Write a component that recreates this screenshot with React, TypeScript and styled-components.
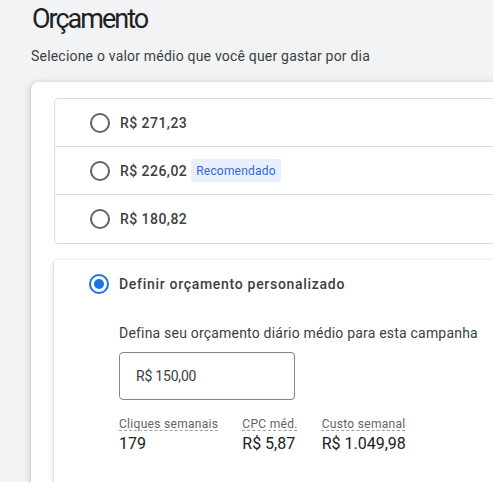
import React from "react";
import styled, { createGlobalStyle } from "styled-components";

const Global = createGlobalStyle`
  html, body { margin: 0; padding: 0; background: #f1f3f4; }
  body { font-family: Roboto, "Liberation Sans", Arial, sans-serif; }
`;

const Page = styled.div`
  width: 493px;
  height: 482px;
  overflow: hidden;
  background: #f1f3f4;
  box-sizing: border-box;
  padding-top: 1px;
`;

const Header = styled.div`
  padding-left: 31px;
`;

const Title = styled.h1`
  margin: 0 0 0 1px;
  font-size: 27px;
  line-height: 36px;
  font-weight: 400;
  letter-spacing: -2px;
  color: #202124;
`;

const Subtitle = styled.p`
  margin: 9px 0 0 0;
  font-size: 14px;
  line-height: 20px;
  letter-spacing: 0.2px;
  color: #3c4043;
`;

const Card = styled.div`
  margin: 16px 0 0 31px;
  width: 520px;
  min-height: 420px;
  background: #fff;
  border-radius: 8px 0 0 0;
  box-shadow: 0 1px 2px rgba(60, 64, 67, 0.3), 0 2px 6px 2px rgba(60, 64, 67, 0.15);
  padding: 16px 0 0 23px;
  box-sizing: border-box;
  display: flex;
  flex-direction: column;
  gap: 16px;
`;

const Group = styled.div`
  border: 1px solid #dadce0;
  border-radius: 4px;
  display: flex;
  flex-direction: column;
`;

const Row = styled.div<{ $last?: boolean }>`
  height: 48px;
  box-sizing: border-box;
  display: flex;
  align-items: center;
  padding-left: 35px;
  gap: 10px;
  border-bottom: ${(p) => (p.$last ? "none" : "1px solid #dadce0")};
`;

const Radio = styled.span<{ $checked?: boolean }>`
  width: 20px;
  height: 20px;
  box-sizing: border-box;
  border-radius: 50%;
  border: 2px solid ${(p) => (p.$checked ? "#1a73e8" : "#5f6368")};
  display: flex;
  align-items: center;
  justify-content: center;
  flex: none;
  &::after {
    content: "";
    display: ${(p) => (p.$checked ? "block" : "none")};
    width: 10px;
    height: 10px;
    border-radius: 50%;
    background: #1a73e8;
  }
`;

const Amount = styled.span`
  font-size: 14px;
  font-weight: 500;
  letter-spacing: 0.45px;
  color: #3c4043;
`;

const Chip = styled.span`
  margin-left: -6px;
  height: 23px;
  padding: 0 5px;
  display: inline-flex;
  align-items: center;
  background: #e8f0fe;
  color: #3367d6;
  font-size: 12px;
  letter-spacing: 0.2px;
  border-radius: 2px;
`;

const Custom = styled.div`
  background: #fff;
  border-radius: 4px 0 0 0;
  box-shadow: 0 1px 2px rgba(60, 64, 67, 0.3), 0 1px 4px 1px rgba(60, 64, 67, 0.15);
  min-height: 240px;
`;

const CustomHeader = styled.div`
  height: 48px;
  display: flex;
  align-items: center;
  padding-left: 35px;
  gap: 10px;
`;

const CustomLabel = styled.span`
  font-size: 14px;
  font-weight: 500;
  letter-spacing: 0.7px;
  color: #3c4043;
`;

const CustomBody = styled.div`
  padding: 15px 0 0 65px;
  display: flex;
  flex-direction: column;
`;

const Hint = styled.div`
  font-size: 14px;
  line-height: 20px;
  letter-spacing: 0.2px;
  color: #3c4043;
`;

const InputBox = styled.div`
  margin-top: 9px;
  width: 176px;
  height: 48px;
  box-sizing: border-box;
  border: 1px solid #80868b;
  border-radius: 4px;
  display: flex;
  align-items: center;
  padding-left: 16px;
  font-size: 14px;
  color: #3c4043;
  letter-spacing: -0.2px;
`;

const Stats = styled.div`
  margin-top: 16px;
  display: flex;
  gap: 24px;
`;

const Stat = styled.div`
  display: flex;
  flex-direction: column;
`;

const StatLabel = styled.span`
  font-size: 12px;
  line-height: 16px;
  letter-spacing: 0.3px;
  color: #5f6368;
  text-decoration: underline dashed #9aa0a6;
  text-underline-offset: 2px;
  align-self: flex-start;
`;

const StatValue = styled.span`
  font-size: 16px;
  line-height: 22px;
  color: #202124;
  margin-top: 1px;
`;

const options = [
  { value: "R$ 271,23" },
  { value: "R$ 226,02", recommended: true },
  { value: "R$ 180,82" },
];

const stats = [
  { label: "Cliques semanais", value: "179" },
  { label: "CPC méd.", value: "R$ 5,87" },
  { label: "Custo semanal", value: "R$ 1.049,98" },
];

export default function App() {
  return (
    <Page>
      <Global />
      <Header>
        <Title>Orçamento</Title>
        <Subtitle>Selecione o valor médio que você quer gastar por dia</Subtitle>
      </Header>
      <Card>
        <Group>
          {options.map((o, i) => (
            <Row key={o.value} $last={i === options.length - 1}>
              <Radio />
              <Amount>{o.value}</Amount>
              {o.recommended && <Chip>Recomendado</Chip>}
            </Row>
          ))}
        </Group>
        <Custom>
          <CustomHeader>
            <Radio $checked />
            <CustomLabel>Definir orçamento personalizado</CustomLabel>
          </CustomHeader>
          <CustomBody>
            <Hint>Defina seu orçamento diário médio para esta campanha</Hint>
            <InputBox>R$ 150,00</InputBox>
            <Stats>
              {stats.map((s) => (
                <Stat key={s.label}>
                  <StatLabel>{s.label}</StatLabel>
                  <StatValue>{s.value}</StatValue>
                </Stat>
              ))}
            </Stats>
          </CustomBody>
        </Custom>
      </Card>
    </Page>
  );
}
